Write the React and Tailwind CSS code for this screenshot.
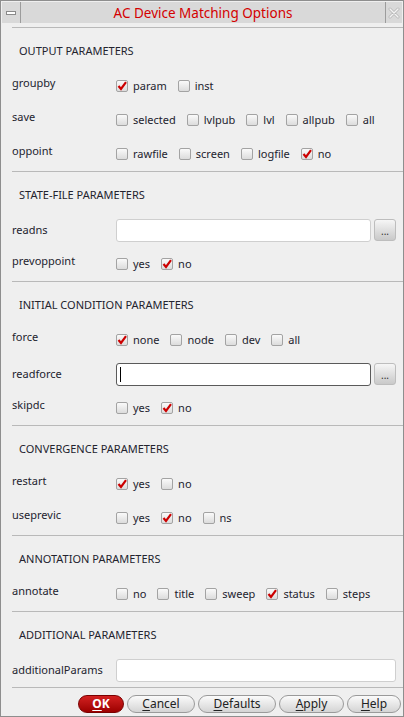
import React from "react";

const Check = ({ on }) => (
  <span className="w-[12px] h-[12px] shrink-0 border border-[#a3a3a3] rounded-[2px] bg-gradient-to-b from-[#fafafa] to-[#dcdcdc] flex items-center justify-center">
    {on && (
      <svg width="10" height="10" viewBox="0 0 10 10">
        <path d="M1.5 5 L4 8 L9 1.2" fill="none" stroke="#cc0000" strokeWidth="2.2" strokeLinejoin="miter" />
      </svg>
    )}
  </span>
);

const Opt = ({ label, on }) => (
  <span className="flex items-center">
    <Check on={on} />
    <span className="ml-[5px]">{label}</span>
  </span>
);

const Sep = () => <div className="h-px bg-[#b9b9b9] ml-[11px]" />;

const Header = ({ children }) => (
  <div className="h-[41px] pl-[18px] pt-[15px] leading-[16px]">{children}</div>
);

const CheckRow = ({ label, opts }) => (
  <div className="h-[34px] flex">
    <div className="w-[115px] pl-[11px] pt-[6px] leading-[16px]">{label}</div>
    <div className="flex items-center gap-[11px] h-[16px] mt-[9px] leading-[16px]">
      {opts.map(([l, on]) => (
        <Opt key={l} label={l} on={on} />
      ))}
    </div>
  </div>
);

const Dots = () => (
  <div className="w-[22px] h-[22px] ml-[3px] rounded-[3px] border border-[#bdbdbd] bg-gradient-to-b from-[#f6f6f6] to-[#c9c9c9] flex items-end justify-center pb-[4px] text-[10px] leading-[10px] text-[#333]">
    ...
  </div>
);

const InputRow = ({ label, focused, dots, full }) => (
  <div className="h-[34px] flex items-center">
    <div className="w-[115px] pl-[11px] leading-[16px]">{label}</div>
    <div
      className={
        "h-[23px] bg-white rounded-[3px] flex items-center " +
        (full ? "w-[280px] " : "w-[255px] ") +
        (focused ? "border border-[#5a5a5a]" : "border border-[#cfcfcf]")
      }
    >
      {focused && <span className="ml-[3px] w-px h-[15px] bg-black" />}
    </div>
    {dots && <Dots />}
  </div>
);

const Btn = ({ children, w, red }) => (
  <div
    className={
      "h-[18px] rounded-full flex items-center justify-center text-[12px] leading-[16px] " +
      w +
      (red
        ? " bg-gradient-to-b from-[#d42020] to-[#9c0000] border border-[#7a0000] text-white font-bold"
        : " bg-gradient-to-b from-[#fbfbfb] to-[#d4d4d4] border border-[#9a9a9a] text-[#222]")
    }
  >
    {children}
  </div>
);

export default function App() {
  return (
    <div
      className="w-[404px] h-[717px] bg-[#efefef] border-l border-r border-b border-t border-[#8e8e8e] text-[11px] text-[#23232e] overflow-hidden"
      style={{ fontFamily: "'Noto Sans', 'Open Sans', sans-serif" }}
    >
      {/* title bar */}
      <div className="h-[21px] flex mt-[1px] mx-[1px] gap-[1px] bg-[#9c9c9c]">
        <div className="w-[18px] bg-[#d9d9d9] flex items-center justify-center">
          <span className="w-[10px] h-[4px] bg-white border border-[#8a8a8a]" />
        </div>
        <div className="flex-1 bg-[#d9d9d9] flex items-center justify-center text-[13.5px] text-[#d40000] leading-[18px]">
          AC Device Matching Options
        </div>
        <div className="w-[16px] bg-[#d9d9d9] flex items-center justify-center">
          <svg width="12" height="12" viewBox="0 0 12 12">
            <path d="M2 2 L10 10 M10 2 L2 10" stroke="#b8b8b8" strokeWidth="3" strokeLinecap="round" />
            <path d="M2 2 L10 10 M10 2 L2 10" stroke="#f4f4f4" strokeWidth="1.4" strokeLinecap="round" />
          </svg>
        </div>
      </div>
      <div className="h-[4px]" />

      <Sep />
      <Header>OUTPUT PARAMETERS</Header>
      <CheckRow label="groupby" opts={[["param", true], ["inst", false]]} />
      <CheckRow
        label="save"
        opts={[["selected", false], ["lvlpub", false], ["lvl", false], ["allpub", false], ["all", false]]}
      />
      <CheckRow
        label="oppoint"
        opts={[["rawfile", false], ["screen", false], ["logfile", false], ["no", true]]}
      />

      <Sep />
      <Header>STATE-FILE PARAMETERS</Header>
      <InputRow label="readns" dots />
      <CheckRow label="prevoppoint" opts={[["yes", false], ["no", true]]} />

      <Sep />
      <Header>INITIAL CONDITION PARAMETERS</Header>
      <CheckRow
        label="force"
        opts={[["none", true], ["node", false], ["dev", false], ["all", false]]}
      />
      <InputRow label="readforce" dots focused />
      <CheckRow label="skipdc" opts={[["yes", false], ["no", true]]} />

      <Sep />
      <Header>CONVERGENCE PARAMETERS</Header>
      <CheckRow label="restart" opts={[["yes", true], ["no", false]]} />
      <CheckRow label="useprevic" opts={[["yes", false], ["no", true], ["ns", false]]} />

      <Sep />
      <Header>ANNOTATION PARAMETERS</Header>
      <CheckRow
        label="annotate"
        opts={[["no", false], ["title", false], ["sweep", false], ["status", true], ["steps", false]]}
      />

      <Sep />
      <Header>ADDITIONAL PARAMETERS</Header>
      <InputRow label="additionalParams" full />

      <Sep />
      <div className="flex justify-end gap-[3px] pr-[2px] pt-[7px]">
        <Btn w="w-[46px]" red>
          <span className="underline underline-offset-2">O</span>K
        </Btn>
        <Btn w="w-[68px]">
          <span className="underline underline-offset-2">C</span>ancel
        </Btn>
        <Btn w="w-[78px]">
          <span className="underline underline-offset-2">D</span>efaults
        </Btn>
        <Btn w="w-[65px]">
          <span className="underline underline-offset-2">A</span>pply
        </Btn>
        <Btn w="w-[54px]">
          <span className="underline underline-offset-2">H</span>elp
        </Btn>
      </div>
    </div>
  );
}
